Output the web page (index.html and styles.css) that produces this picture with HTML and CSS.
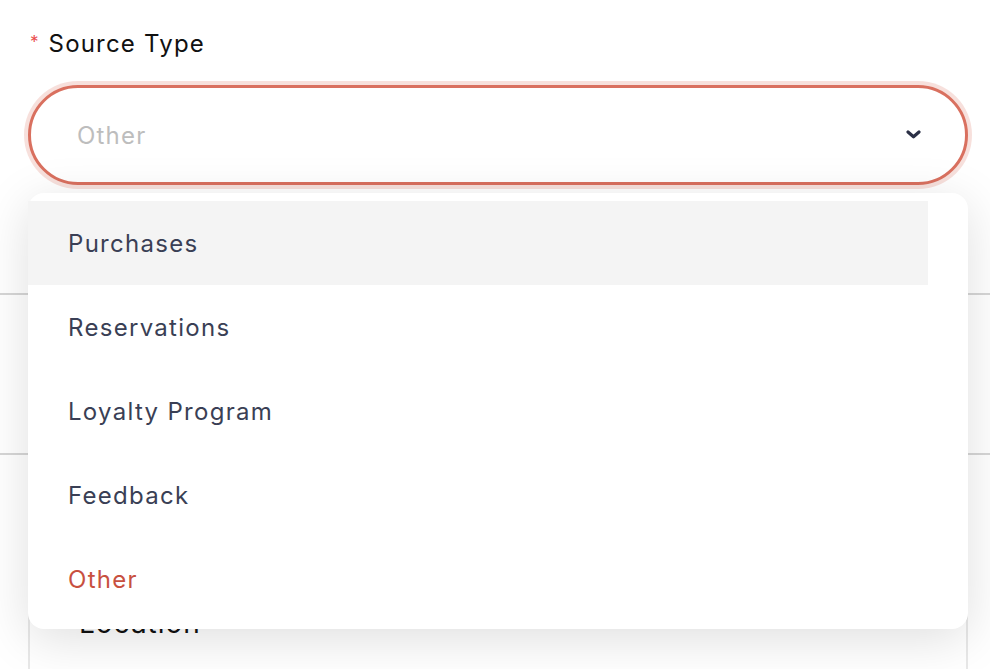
FILE: index.html
```html
<!DOCTYPE html>
<html lang="en">
<head>
<meta charset="utf-8">
<title>Source Type</title>
<link rel="stylesheet" href="styles.css">
</head>
<body>
<div class="page">
  <div class="field">
    <label class="label"><span class="req">*</span>Source Type</label>
    <div class="select-wrap">
      <div class="select">
        <span class="placeholder">Other</span>
        <svg class="chevron" width="15" height="9" viewBox="0 0 15 9"><path d="M2 2 L7.5 6.8 L13 2" fill="none" stroke="#2b3046" stroke-width="3.2" stroke-linecap="round" stroke-linejoin="round"/></svg>
      </div>
      <ul class="menu">
        <li class="item active">Purchases</li>
        <li class="item">Reservations</li>
        <li class="item">Loyalty Program</li>
        <li class="item">Feedback</li>
        <li class="item selected">Other</li>
      </ul>
    </div>
  </div>
  <div class="behind">
    <div class="rule first"></div>
    <div class="rule second"></div>
    <div class="box"><span class="box-title">Location</span></div>
  </div>
</div>
</body>
</html>
```
FILE: styles.css
```css
* { box-sizing: border-box; }
html, body { margin: 0; padding: 0; background: #fff; }
body {
  font-family: "Inter", "Liberation Sans", sans-serif;
  width: 990px;
  height: 669px;
  overflow: hidden;
}
.page { position: relative; height: 669px; overflow: hidden; }
.field { padding: 28px 22px 0 28px; }
.label {
  display: flex;
  align-items: flex-start;
  font-size: 24px;
  letter-spacing: 1.2px;
  line-height: 32px;
  color: #111;
  height: 32px;
}
.req {
  color: #ea4d4d;
  font-size: 17px;
  line-height: 24px;
  letter-spacing: 0;
  margin: 2px 10px 0 2px;
}
.select-wrap { position: relative; margin-top: 25px; }
.select {
  height: 100px;
  border: 3px solid #d9705f;
  border-radius: 50px;
  box-shadow: 0 0 0 4px rgba(217, 112, 95, 0.22);
  display: flex;
  align-items: center;
  justify-content: space-between;
  padding: 0 44px 0 46px;
  background: #fff;
}
.placeholder { font-size: 24px; letter-spacing: 1.2px; color: #bdbdbd; }
.chevron { display: block; margin-top: -2px; }
.menu {
  position: absolute;
  left: 0;
  right: 0;
  top: 108px;
  margin: 0;
  padding: 8px 0;
  list-style: none;
  background: #fff;
  border-radius: 16px;
  box-shadow: 0 10px 50px rgba(0, 0, 0, 0.13);
  z-index: 2;
}
.item {
  height: 84px;
  display: flex;
  align-items: center;
  padding-left: 40px;
  margin-right: 40px;
  font-size: 24px;
  letter-spacing: 1.3px;
  color: #3a3f55;
}
.item.active { background: #f4f4f4; }
.item.selected { color: #c8503f; }
.behind { position: relative; }
.rule { height: 2px; background: #d6d6d6; }
.rule.first { margin-top: 108px; }
.rule.second { margin-top: 158px; }
.box {
  margin: 141px 22px 0 28px;
  height: 120px;
  border: 2px solid #e8e8e8;
  border-radius: 16px;
  padding: 8px 0 0 49px;
}
.box-title { font-size: 28px; letter-spacing: 1px; color: #111; }
```
